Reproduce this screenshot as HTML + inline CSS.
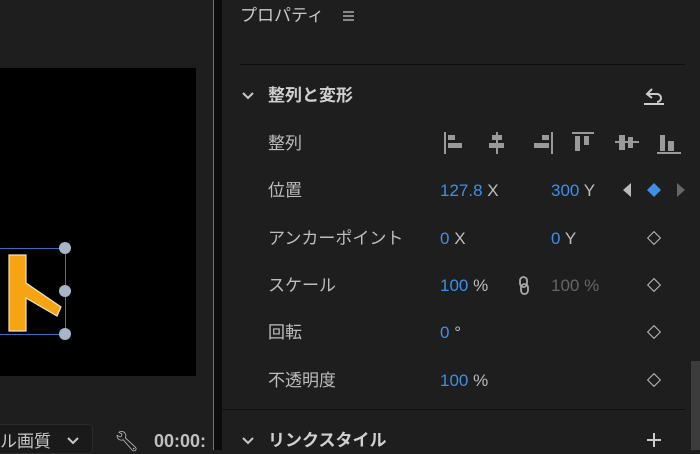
<!DOCTYPE html>
<html><head><meta charset="utf-8"><style>
*{margin:0;padding:0;box-sizing:border-box}
html,body{width:700px;height:450px}
body{background:#1e1e1e;overflow:hidden;position:relative;font-family:"Liberation Sans","Noto Sans CJK JP",sans-serif;color:#c8c8c8}
.a{position:absolute;white-space:nowrap}
.l{font-size:17px;color:#bdbdbd;line-height:20px}
.b{color:#3d8fe8}
.dm{width:10px;height:10px;border:1.6px solid #bdbdbd;transform:rotate(45deg)}
</style></head><body>
<div class="a" style="left:0;top:68px;width:196px;height:308px;background:#000"></div>
<div class="a" style="left:0;top:248px;width:66px;height:87px;border:1px solid #3a6fc0;border-left:none"></div>
<div class="a" style="left:59px;top:242px;width:12px;height:12px;border-radius:50%;background:#a8b4c8"></div>
<div class="a" style="left:59px;top:285px;width:12px;height:12px;border-radius:50%;background:#a8b4c8"></div>
<div class="a" style="left:59px;top:328px;width:12px;height:12px;border-radius:50%;background:#a8b4c8"></div>
<svg class="a" style="left:5px;top:253px" width="58" height="80"><path d="M4 2H21V30L56 54L52 63L21 45V78H4Z" fill="#f5a511" stroke="#f5e0c0" stroke-width="1.2"/></svg>
<div class="a" style="left:-10px;top:424px;width:103px;height:30px;background:#1a1a1a;border:1px solid #2a2a2a;border-radius:4px"></div>
<div class="a l" style="left:0;top:432px;color:#c8c8c8">ル画質</div>
<svg class="a" style="left:66px;top:436px" width="14" height="10"><path d="M2 2L7 7L12 2" stroke="#c8c8c8" stroke-width="2" fill="none"/></svg>
<div class="a" style="left:114px;top:429px;font-size:20px;color:#bbb">🔧︎</div>
<div class="a" style="left:154px;top:431px;font-size:18px;font-weight:bold;color:#c0c0c0">00:00:</div>
<div class="a" style="left:213px;top:0;width:1px;height:450px;background:#3b7fd6"></div>
<div class="a" style="left:214px;top:0;width:8px;height:450px;background:#0c0c0c"></div>
<div class="a l" style="left:240px;top:6px;color:#c8c8c8">プロパティ</div>
<div class="a" style="left:343px;top:11px;width:11px;height:2px;background:#888;box-shadow:0 4px #888,0 8px #888"></div>
<div class="a" style="left:240px;top:64px;width:445px;height:1px;background:#0e0e0e"></div>
<svg class="a" style="left:241px;top:91px" width="14" height="10"><path d="M2 2L7 7L12 2" stroke="#c8c8c8" stroke-width="2" fill="none"/></svg>
<div class="a l" style="left:268px;top:86px;font-weight:bold;color:#d0d0d0">整列と変形</div>
<svg class="a" style="left:642px;top:86px" width="24" height="20"><path d="M6 8H15A4 4 0 0 1 15 16" stroke="#ccc" stroke-width="2" fill="none"/><path d="M10 3L5 8L10 12" stroke="#ccc" stroke-width="2" fill="none"/><path d="M2 18H22" stroke="#ccc" stroke-width="2"/></svg>
<div class="a l" style="left:268px;top:134px">整列</div>
<svg class="a" style="left:443px;top:131px" width="240" height="24" fill="#9a9a9a">
<rect x="1" y="1" width="2" height="22"/><rect x="5" y="4" width="7" height="5"/><rect x="5" y="12" width="14" height="5"/>
<rect x="53" y="1" width="2" height="22"/><rect x="49" y="4" width="10" height="5"/><rect x="46" y="12" width="15" height="5"/>
<rect x="108" y="1" width="2" height="22"/><rect x="99" y="4" width="7" height="5"/><rect x="91" y="12" width="15" height="5"/>
<rect x="129" y="1" width="22" height="2"/><rect x="132" y="5" width="5" height="15"/><rect x="141" y="5" width="5" height="9"/>
<rect x="172" y="10" width="24" height="2"/><rect x="176" y="4" width="6" height="15"/><rect x="185" y="6" width="5" height="11"/>
<rect x="214" y="21" width="24" height="2"/><rect x="217" y="4" width="5" height="16"/><rect x="225" y="10" width="6" height="10"/>
</svg>
<div class="a l" style="left:268px;top:181px">位置</div>
<div class="a l" style="left:440px;top:181px"><span class="b">127.8</span> X</div>
<div class="a l" style="left:551px;top:181px"><span class="b">300</span> Y</div>
<svg class="a" style="left:620px;top:181px" width="68" height="18"><path d="M11 2V16L3 9Z" fill="#bbb"/><path d="M34 2L41 9L34 16L27 9Z" fill="#3d8fe8"/><path d="M57 2V16L65 9Z" fill="#666"/></svg>
<div class="a l" style="left:268px;top:229px">アンカーポイント</div>
<div class="a l" style="left:440px;top:229px"><span class="b">0</span> X</div>
<div class="a l" style="left:551px;top:229px"><span class="b">0</span> Y</div>
<div class="a dm" style="left:649px;top:233px"></div>
<div class="a l" style="left:268px;top:276px">スケール</div>
<div class="a l" style="left:440px;top:276px"><span class="b">100</span> %</div>
<svg class="a" style="left:518px;top:276px" width="12" height="20"><rect x="2" y="1" width="7" height="10" rx="3.5" stroke="#aaa" stroke-width="1.8" fill="none"/><rect x="3" y="8" width="7" height="10" rx="3.5" stroke="#aaa" stroke-width="1.8" fill="none"/></svg>
<div class="a l" style="left:551px;top:276px;color:#666">100 %</div>
<div class="a dm" style="left:649px;top:280px"></div>
<div class="a l" style="left:268px;top:323px">回転</div>
<div class="a l" style="left:440px;top:323px"><span class="b">0</span> °</div>
<div class="a dm" style="left:649px;top:327px"></div>
<div class="a l" style="left:268px;top:371px">不透明度</div>
<div class="a l" style="left:440px;top:371px"><span class="b">100</span> %</div>
<div class="a dm" style="left:649px;top:375px"></div>
<div class="a" style="left:222px;top:409px;width:463px;height:1px;background:#0e0e0e"></div>
<svg class="a" style="left:241px;top:436px" width="14" height="10"><path d="M2 2L7 7L12 2" stroke="#c8c8c8" stroke-width="2" fill="none"/></svg>
<div class="a l" style="left:268px;top:431px;font-weight:bold;color:#d0d0d0">リンクスタイル</div>
<div class="a" style="left:647px;top:439px;width:14px;height:2px;background:#ccc"></div>
<div class="a" style="left:653px;top:433px;width:2px;height:14px;background:#ccc"></div>
<div class="a" style="left:691px;top:361px;width:9px;height:89px;background:#3c3c3c"></div>
</body></html>
